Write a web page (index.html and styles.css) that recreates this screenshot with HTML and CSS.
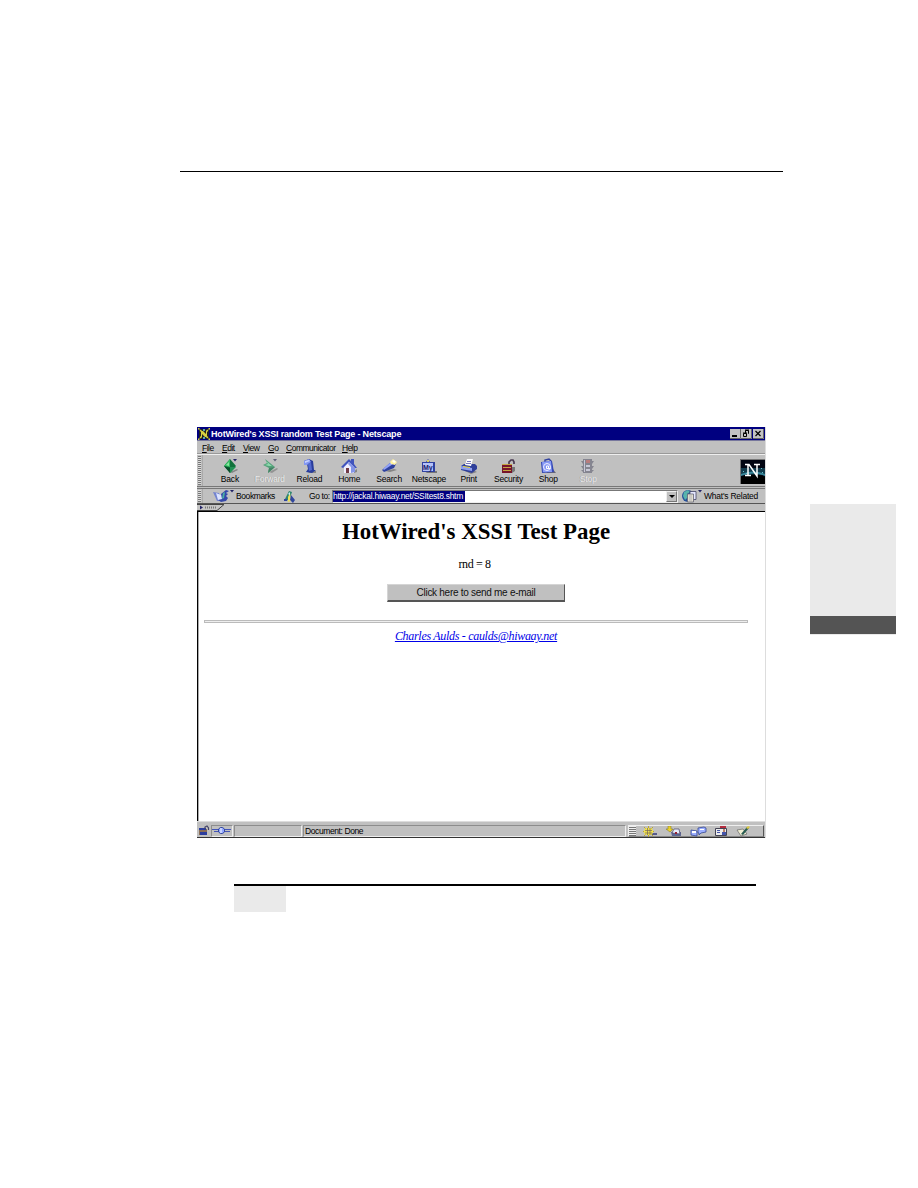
FILE: index.html
```html
<!DOCTYPE html>
<html lang="en">
<head>
<meta charset="utf-8">
<title>HotWired's XSSI random Test Page</title>
<link rel="stylesheet" href="styles.css">
</head>
<body>
<div class="sheet">
<main class="column">
<div class="head-rule"></div>
<section class="window">
<header class="titlebar">
<svg class="app-icon" width="12" height="12" viewBox="0 0 12 12"><path fill="#222" d="M1 1h10v10H1z"/><path stroke="#d8d040" stroke-dasharray="2 1" stroke-width="1.500" d="M0 0l4 4M12 0L8 4M0 12l4-4M12 12L8 8"/><path fill="#d8d040" d="M3 3h2l3 3V3h1v6H7L4 6v3H3z"/><path fill="#55a5b0" d="M5 1h2v2H5zM5 9h2v2H5z"/></svg>
<span class="title">HotWired's XSSI random Test Page - Netscape</span>
<span class="controls">
<svg width="11" height="10" viewBox="0 0 11 10"><path fill="#c3c3c3" d="M0 0h11v10H0z"/><path fill="none" stroke="#666" d="M0 9.500h10.500V0"/><path fill="#000" d="M2 6h5v2H2z"/></svg><svg width="11" height="10" viewBox="0 0 11 10"><path fill="#c3c3c3" d="M0 0h11v10H0z"/><path fill="none" stroke="#666" d="M0 9.500h10.500V0"/><path fill="none" stroke="#000" d="M4.500 4V1.500h3v3H7M2.500 4.500h3v3h-3zM2 4h4M4 1h4"/></svg><svg class="close" width="11" height="10" viewBox="0 0 11 10"><path fill="#c3c3c3" d="M0 0h11v10H0z"/><path fill="none" stroke="#666" d="M0 9.500h10.500V0"/><path stroke="#000" stroke-width="1.200" d="M2.500 2l5 5M7.500 2l-5 5"/></svg>
</span>
</header>
<nav class="menu"><span class="m-file"><u>F</u>ile</span><span class="m-edit"><u>E</u>dit</span><span class="m-view"><u>V</u>iew</span><span class="m-go"><u>G</u>o</span><span class="m-comm"><u>C</u>ommunicator</span><span><u>H</u>elp</span></nav>
<div class="toolbar">
<div class="grip"><i></i></div>
<div class="tools">
<div class="tool"><svg width="18" height="17" viewBox="0 0 18 17"><path fill="#858585" d="M9 14l7-3 1 1-6 3z"/><path fill="#11733c" d="M9 1l6 7-6 7-6-7z"/><path fill="#35bd63" d="M9 1v8l-6-1z"/><path fill="#8ae6a0" d="M8 4v4L5 7z"/><path fill="#07502b" d="M3 8l6 2v5z"/><path fill="#229354" d="M9 9h6l-6 6z"/><path fill="#226" d="M12 1h4l-2 2.500z"/></svg><span>Back</span></div>
<div class="tool off"><svg width="18" height="17" viewBox="0 0 18 17"><path fill="#888" d="M8 14l8-4 1 1-6 4z"/><path fill="#399b69" d="M4 1l10 8-7 6 1-5-6-3 4-2z"/><path fill="#82dfa9" d="M5 3l6 5H8L4 7l3-1z"/><path fill="#26734e" d="M8 10l6-1-7 6z"/><path fill="#446" d="M12 1h4l-2 2.500z"/></svg><span>Forward</span></div>
<div class="tool"><svg width="18" height="17" viewBox="0 0 18 17"><path fill="#858585" d="M11 13h5v2H8z"/><path fill="#283c9c" d="M4 3l5-2 4 2 1 9h2l-4 3-6-1 2-3-1-5H4z"/><path fill="#8397f2" d="M4 3l5-2 2 3-4 3H4z"/><path fill="#5268cd" d="M8 6l3-2 1 8-3 1z"/><path fill="#c8d2ff" d="M5 3l4-1 1 1-5 2z"/></svg><span>Reload</span></div>
<div class="tool"><svg width="18" height="17" viewBox="0 0 18 17"><path fill="#858585" d="M13 14l4-3v3l-3 1z"/><path fill="#eef" d="M4 8l5-5 5 5v7H4z"/><path fill="#4054bd" d="M1 9l8-8 2 2V1h3v5l3 4h-2L9 4 3 10z"/><path fill="#8495e8" d="M9 4l6 6v4l-4 1V9L8 6z"/><path fill="#703945" d="M6 10h3v5H6z"/></svg><span>Home</span></div>
<div class="tool"><svg width="20" height="17" viewBox="0 0 20 17"><path fill="#858585" d="M6 13l9-2 3 1-7 2z"/><path fill="#2e419f" d="M3 12l9-8 5 2-2 4-10 4z"/><path fill="#91a2f8" d="M4 11l8-7 2 2-9 6z"/><path fill="#fff2a0" d="M11 4l3-3 4 3-2 3-4-1z"/><path fill="#fff" d="M13 3l2-1 2 2-2 1z"/></svg><span>Search</span></div>
<div class="tool"><svg width="18" height="17" viewBox="0 0 18 17"><path fill="#777" d="M4 13h13v2H7z"/><path fill="#3042a0" d="M2 4h4l2-3 2 3h5v10H2z"/><path fill="#b5c2fa" d="M3 5h10v8H3z"/><text x="3" y="11.500" class="my">My</text><path fill="#ddd05c" d="M7 2h2v2H7z"/></svg><span>Netscape</span></div>
<div class="tool"><svg width="20" height="17" viewBox="0 0 20 17"><path fill="#858585" d="M6 13h10l2 1-6 2z"/><path fill="#2e3e9a" d="M2 8l3-2h11l2 2v3l-5 4-11-3z"/><path fill="#8e9ff0" d="M2 8l11 2v3L2 11z"/><path fill="#fff" d="M6 7l2-6h6l-2 7z"/><path fill="#77b" d="M8 3h4v1H8zM7 5h5v1H7z"/><path fill="#ebd93d" d="M4 8l7 1v1L4 9z"/></svg><span>Print</span></div>
<div class="tool"><svg width="18" height="17" viewBox="0 0 18 17"><path fill="#777" d="M13 9h3v4l-3 2z"/><path fill="none" stroke="#493850" stroke-width="1.700" d="M10 8V4l2-2h2l1 2v2"/><path fill="#76152a" d="M3 6h10v9H3z"/><path fill="#c5a541" d="M3 6h10v1H3zM4 9h8v1H4zM4 12h8v1H4z"/></svg><span>Security</span></div>
<div class="tool"><svg width="18" height="17" viewBox="0 0 18 17"><path fill="#667" d="M13 10l4 5H7z"/><path fill="none" stroke="#3343a0" stroke-width="1.500" d="M6 5V2l4-1 2 2v3"/><path fill="#3448b5" d="M2 4l11-1 2 11-12 1z"/><path fill="#879af5" d="M3 4l9-1 1 11H4z"/><circle cx="8" cy="9" r="3.500" fill="none" stroke="#eef"/><path fill="none" stroke="#fff" d="M9.500 8H7.500v2.500h2V8v2.500h2"/></svg><span>Shop</span></div>
<div class="tool off"><svg width="16" height="17" viewBox="0 0 16 17"><path fill="#777785" d="M3 1h9v14H3zM1 3h13l-2 3H3zM1 8h13l-2 3H3zM1 12h13l-2 2H3z"/><path fill="#b76d6d" d="M6 2h4v3H6z"/><path fill="#cacbdc" d="M6 7h4v2H6zM6 11h4v2H6zM4 2h1v12H4z"/></svg><span>Stop</span></div>
</div>
<svg class="logo" width="25" height="25" viewBox="0 0 25 25"><path fill="#777" d="M0 0h25v25H0z"/><path fill="#020512" d="M1 1h24v24H1z"/><path fill="#123b4c" d="M1 9h24v7H1z"/><path fill="#39879a" d="M1 15q12-5 24 0v2q-12-5-24 0z"/><path fill="#000" d="M1 18q12-5 24 0v7H1z"/><path fill="#67bcca" d="M3 12h1v1H3zM21 9h1v1h-1zM22 13h1v1h-1zM6 14h1v1H6z"/><path fill="none" stroke="#fff" stroke-width="1.500" d="M5 5.500h4l8 11.500V5.500m-3 0h6M8 5.500v11m-3 0h6"/></svg>
</div>
<div class="location">
<div class="grip"><i></i></div>
<svg class="bm-icon" width="22" height="14" viewBox="0 0 22 14"><path fill="#7384cf" d="M0 3l6 1 3 8H4z"/><path fill="#dce4ff" d="M3 4l5 2 6-3-2 9-7-1z"/><path fill="#3548aa" d="M8 5l5-4 3 1-3 2 2 1-2 2 2 2-2 3-5 1-3-2 4-1z"/><path fill="#4bb1a2" d="M10 4l2-1-1 6-2 1z"/><path fill="#226" d="M17 1h4l-2 2.500z"/></svg>
<span class="bookmarks">Bookmarks</span>
<svg class="pen" width="13" height="13" viewBox="0 0 13 13"><path fill="#2d8570" d="M2 9l4-8 3 1-3 9z"/><path fill="#eee05a" d="M5 7l2-4 1 8-3 1z"/><path fill="#30469d" d="M8 5l4 5-2 3-3-3zM1 9h3v2H1z"/><path fill="#c8efff" d="M5 4l2-2v3z"/></svg>
<span class="goto">Go to:</span>
<div class="address"><span>http://jackal.hiwaay.net/SSItest8.shtm</span><b></b></div>
<svg class="globe" width="22" height="15" viewBox="0 0 22 15"><circle cx="6" cy="7" r="6" fill="#244f9a"/><path fill="#58b3ac" d="M2 3l4-2 2 2-3 2 1 3-3 3-2-4z"/><path fill="#e5e7ff" stroke="#446" stroke-width=".8" d="M8 2.500h6v8H8z"/><path fill="#e2dfd0" stroke="#667" stroke-width=".8" d="M5.500 5h6v8h-6z"/><path stroke="#99a" stroke-width=".6" d="M7 7h3M7 9h3M7 11h3"/><path fill="#226" d="M16 1h4l-2 2.500z"/></svg>
<span class="related">What's Related</span>
</div>
<div class="tabstrip"><svg width="28" height="7" viewBox="0 0 28 7"><path fill="#c5c5c5" stroke="#444" d="M0 .5h27L20 6.500H0"/><path fill="#226" d="M3 1.500v4l3-2z"/><path stroke="#777" stroke-width="2" stroke-dasharray="1 1" d="M8 3.500h12"/></svg></div>
<article class="document">
<h1>HotWired's XSSI Test Page</h1>
<p>rnd = 8</p>
<button>Click here to send me e-mail</button>
<hr>
<address><a href="#">Charles Aulds - caulds@hiwaay.net</a></address>
</article>
<footer class="status">
<div class="cell lock"><svg width="12" height="11" viewBox="0 0 12 11"><path fill="#8a6d55" d="M1 4h8v6H1z"/><path fill="#2c3d9d" d="M1 3h7v2H1zM2 7h7v3H2z"/><path fill="none" stroke="#446" stroke-width="1.200" d="M7 4V2l2-1 1.500 2v2"/></svg></div>
<div class="cell plug"><svg width="20" height="10" viewBox="0 0 20 10"><path stroke="#4355b9" d="M0 3.500h6M13 3.500h6M2 5.500h4M13 5.500h5"/><path fill="#8fa5ff" stroke="#33479c" d="M6.500 3l2-1.500h2l2 1.500v3l-2 1.500h-2l-2-1.500z"/><path stroke="#fff" d="M9 2v5"/></svg></div>
<div class="cell progress"></div>
<div class="cell message">Document: Done</div>
<div class="dock"><span class="handle"></span>
<svg width="15" height="11" viewBox="0 0 15 11"><path fill="#555a8c" d="M6 7h8v2H7z"/><path stroke="#bca929" d="M5.500 0v11M0 5.500h11M1 1l9 9M10 1l-9 9"/><path fill="#efe150" d="M3 2h5l2 2v3L8 9H3L1 7V4z"/><path stroke="#765" stroke-width=".7" d="M4.500 2v7M7 2v7M2 4.500h7M2 7h7"/></svg>
<svg width="16" height="11" viewBox="0 0 16 11"><path fill="#606894" d="M5 6h10v4H6z"/><path fill="#e9ecfa" stroke="#446" stroke-width=".7" d="M6 7l2-4h5l1 5z"/><path fill="#e9d22b" stroke="#81731c" stroke-width=".5" d="M2 0h3v3h2L4 6 0 3h2z"/><path fill="#923" d="M9 6h2v2H9z"/></svg>
<svg width="17" height="11" viewBox="0 0 17 11"><path fill="#9cafff" stroke="#354794" stroke-width=".8" d="M1 4l6 1v5l-6-1zM8 2l6-1 2 1v4l-5 1-2 2V7H8z"/><path fill="#fff" d="M2 5h4v2H2zM10 3h4v1h-4z"/></svg>
<svg width="13" height="11" viewBox="0 0 13 11"><path fill="#eee" stroke="#445" d="M.5 2.500h11v7H.5z"/><path fill="#b32c3e" d="M5 0h6v2H5z"/><path fill="#45a" d="M2 4h3v1H2zM2 6h3v1H2zM7 6h4v3H7z"/><path fill="#b9826c" d="M8 3h2v3H8z"/></svg>
<svg width="15" height="11" viewBox="0 0 15 11"><path fill="#f1efd4" stroke="#666" stroke-width=".7" d="M1 4l6-1 4 5-6 2z"/><path fill="#285b51" d="M5 8l6-7 2 1-6 7z"/><path fill="#ddc841" d="M10 2l2-2 2 1-2 2z"/></svg>
</div>
</footer>
</section>
<div class="note"><span></span></div>
</main>
<aside class="thumb-tab"></aside>
</div>
</body>
</html>
```
FILE: styles.css
```css
*{box-sizing:border-box}
body{margin:0;background:#fff;color:#000;font-family:"Liberation Sans",Arial,sans-serif;font-size:8.500px}
.sheet{display:grid;grid-template-columns:603px 86px;column-gap:27px;padding-left:180px;height:1188px;overflow:hidden}
.column{padding-top:171px}
.head-rule{height:1px;background:#000}
.window{width:569px;height:411px;margin:255px 0 0 17px;background:#c0c0c0;display:flex;flex-direction:column;border-right:1px solid #ddd}
svg{display:block;flex:none}
.titlebar{height:14px;background:#000080;color:#fff;display:flex;align-items:center;padding:0 1px;border-bottom:1px solid #77779d}
.title{font-weight:bold;font-size:9px;letter-spacing:-.18px;margin-left:1px;white-space:nowrap}
.controls{display:flex;margin-left:auto}
.close{margin-left:1px}
.menu{height:13px;display:flex;padding-left:5px;line-height:14px;letter-spacing:-.5px;border-bottom:1px solid #999;white-space:nowrap}
.m-file{width:20px}.m-edit{width:21px}.m-view{width:25px}.m-go{width:18px}.m-comm{width:56px;letter-spacing:-.2px}
.menu .m-comm{letter-spacing:-.48px}
.toolbar{height:35px;display:flex;flex:none;border-top:1px solid #eee;border-bottom:3px double #777}
.grip{width:6px;flex:none;padding:1px;border-right:1px solid #aaa}
.grip i{display:block;height:100%;background:repeating-linear-gradient(0deg,#777 0 1px,#ddd 1px 2px)}
.tools{display:flex;padding-left:7px}
.tool{width:39.8px;display:flex;flex-direction:column;align-items:center;padding-top:3px;white-space:nowrap;letter-spacing:-.2px}
.tool svg{height:17px}
.tool span{line-height:9px}
.tool.off{color:#eee;text-shadow:-.5px -.5px #888}
.tool.off svg{opacity:.8}
.my{font-size:7px;font-weight:bold;fill:#182068}
.logo{margin:4px 0 0 auto}
.location{height:14px;flex:none;display:flex;align-items:center;white-space:nowrap}
.location .grip{height:14px}
.bm-icon{margin-left:10px}
.bookmarks{margin-left:1px;width:47px;letter-spacing:-.4px}
.pen{width:13px}
.goto{margin-left:13px;width:23px;letter-spacing:-.4px}
.address{width:346px;height:13px;background:#fff;border:1px solid #777;border-right-color:#eee;border-bottom-color:#eee;display:flex;align-items:center;flex:none}
.address span{background:#000080;color:#fff;height:11px;line-height:11px;width:132px;letter-spacing:-.28px}
.address b{margin-left:auto;width:11px;height:11px;background:#c0c0c0;border:1px solid #777;border-left-color:#eee;border-top-color:#eee;display:flex;align-items:center;justify-content:center}
.address b:after{content:"";border:3px solid transparent;border-top-color:#000;border-bottom:0}
.globe{margin-left:4px}
.related{letter-spacing:-.24px}
.tabstrip{height:8px;border-top:1px solid #555;flex:none}
.document{flex:1;background:#fff;border-top:1px solid #000;border-left:1px solid #000;box-shadow:inset 1px 0 #aaa;text-align:center;font-family:"Liberation Serif",Times,serif;padding:6px 17px 0 6px}
h1{margin:0;font-size:22.900px;line-height:28px;white-space:nowrap}
p{margin:10px -1px 0 -4px;font-size:12px;line-height:16px;letter-spacing:-.4px}
button{display:block;width:178px;height:18px;margin:12px auto 0;padding:0;border:1px solid #d5d5d5;border-right:1px solid #555;border-bottom:2px solid #555;background:#c0c0c0;color:#111;font:10px/15px "Liberation Sans",Arial,sans-serif;letter-spacing:-.28px}
hr{height:3px;margin:18px 0 0;border:1px solid #bbb;background:#eee}
address{font-size:12px;line-height:16px;margin-top:5px;white-space:nowrap;letter-spacing:-.3px}
a{color:#0000e8}
.status{height:17px;flex:none;display:flex;padding:3px 1px 1px;border-top:1px solid #ddd;border-bottom:1px solid #333}
.cell{border:1px solid #8d8d8d;border-right-color:#eee;border-bottom-color:#eee;height:12px}
.lock{width:13px;border:0}.plug{width:22px}.progress{width:68px;margin-left:1px}.message{width:323px;margin-left:1px;padding-left:1px;line-height:10px;letter-spacing:-.4px}
.dock{height:12px;flex:1;display:flex;gap:8px;margin-left:2px;border:1px solid #eee;border-right-color:#555;border-bottom-color:#888}
.handle{width:7px;background:repeating-linear-gradient(#eee 0 1px,#777 1px 2px);margin-right:-1px}
.note{margin:46px 0 0 54px;width:522px;border-top:2px solid #000}
.note span{display:block;width:52px;height:26px;background:#eaeaea}
.thumb-tab{margin-top:504px;height:131px;background:#eaeaea;border-bottom:1px solid #eaeaea;box-shadow:inset 0 -18px #545454}
```
